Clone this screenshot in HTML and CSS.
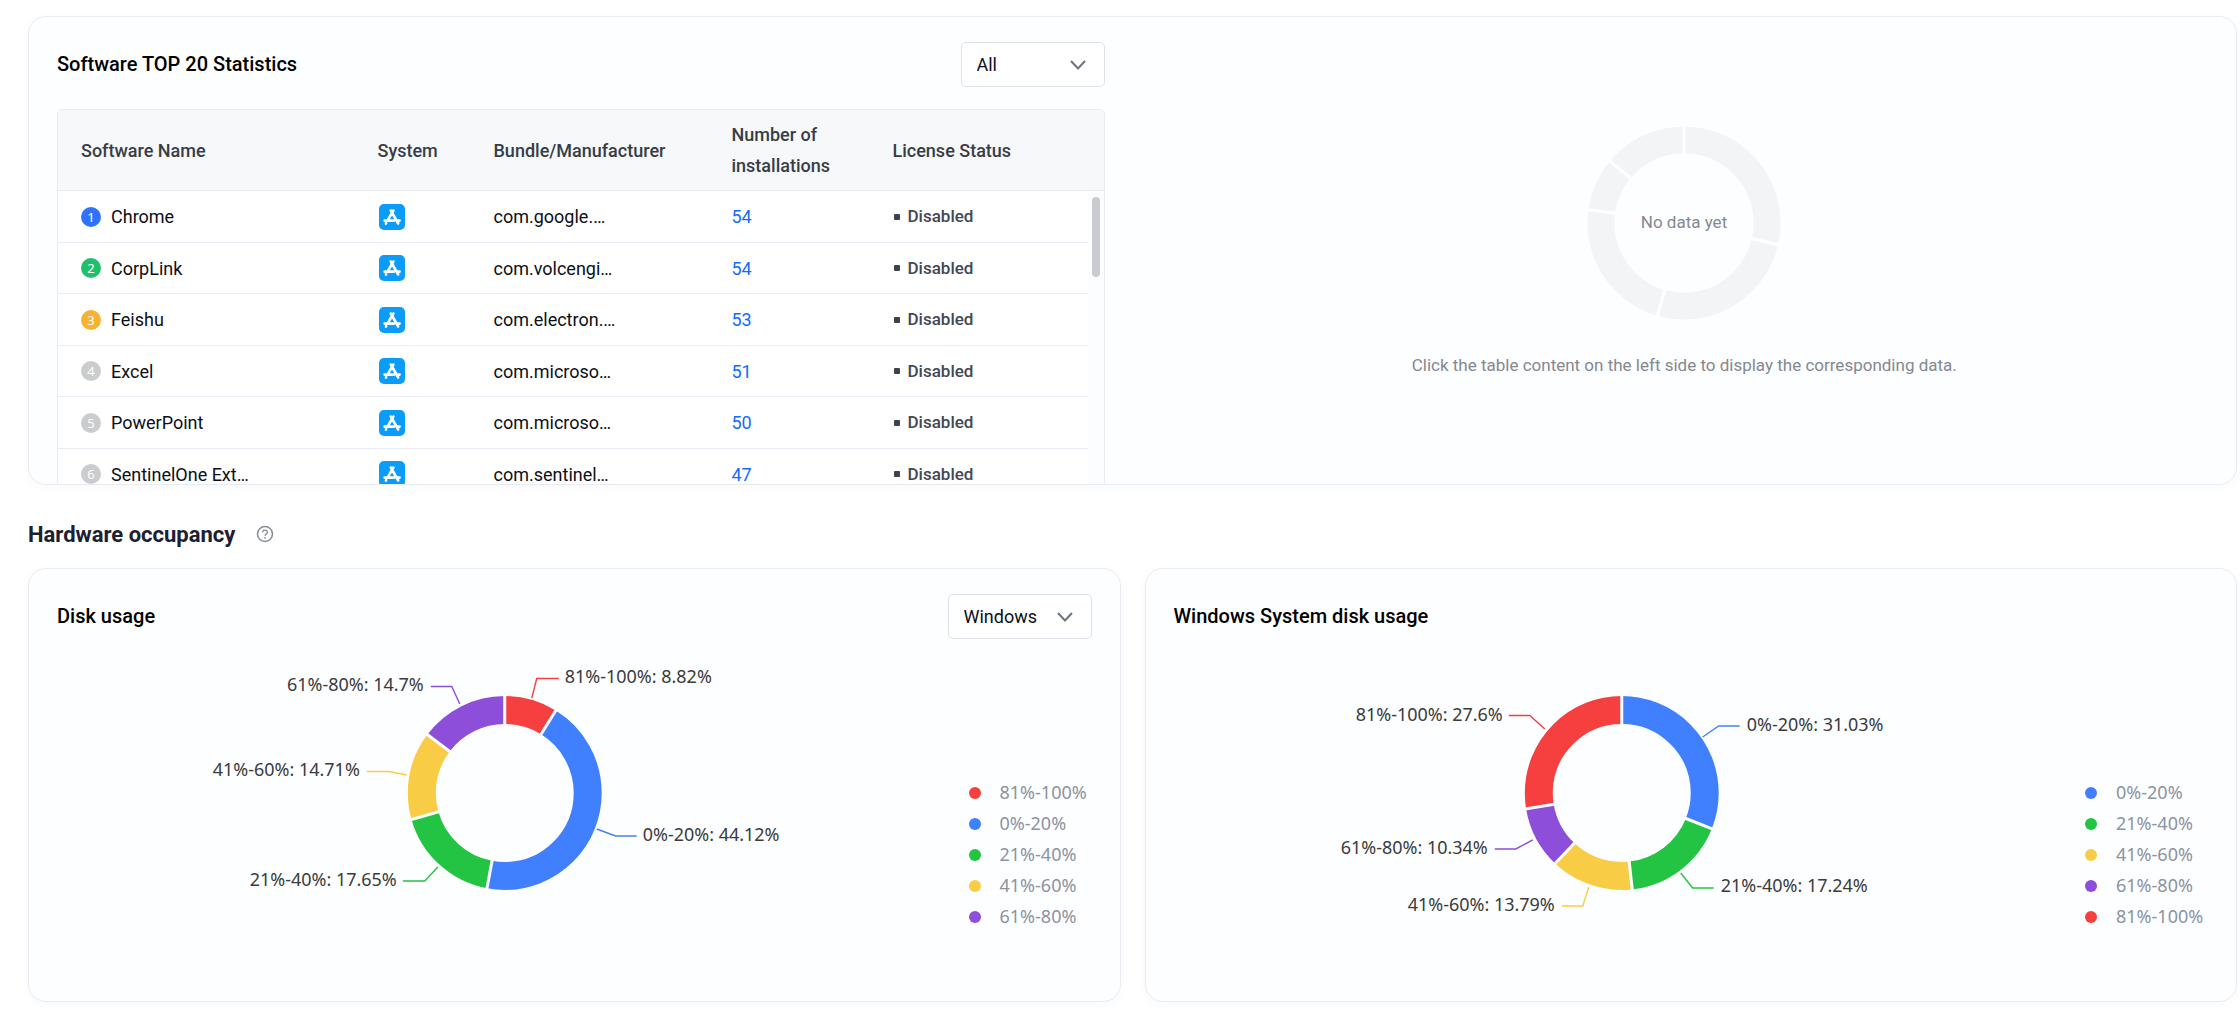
FILE: index.html
```html
<!DOCTYPE html>
<html lang="en">
<head>
<meta charset="utf-8">
<title>Device statistics</title>
<link rel="stylesheet" href="styles.css">
</head>
<body>
<svg class="defs" aria-hidden="true">
  <symbol id="app-store" viewBox="0 0 26 26">
    <rect width="26" height="26" rx="5" fill="#0a9cf8"/>
    <g fill="none" stroke="#fff" stroke-width="2.600" stroke-linecap="round">
      <path d="M14.400 6.500 8.800 16.200M11.800 6.500l7.400 13M5.600 16.600h9.400M18.400 16.600h2.200M7.200 19.200l-.3.5"/>
    </g>
  </symbol>
  <symbol id="chevron" viewBox="0 0 18 12">
    <path d="M2 2l7 7.500 7-7.500" fill="none" stroke="#6e7480" stroke-width="2"/>
  </symbol>
</svg>
<main class="page">
  <section class="card software">
    <div class="software-list">
      <header class="card-head">
        <h2 class="card-title">Software TOP 20 Statistics</h2>
        <div class="select">
          <select aria-label="System"><option>All</option></select>
          <svg class="select-arrow" aria-hidden="true"><use href="#chevron"/></svg>
        </div>
      </header>
      <div class="table-box">
        <table class="table">
          <colgroup><col class="c-name"><col class="c-system"><col class="c-bundle"><col class="c-count"><col class="c-license"><col class="c-gutter"></colgroup>
          <thead>
            <tr><th>Software Name</th><th>System</th><th>Bundle/Manufacturer</th><th>Number of installations</th><th>License Status</th><th class="gutter"></th></tr>
          </thead>
          <tbody>
            <tr><td><div class="name"><span class="rank rank-1">1</span>Chrome</div></td><td><svg class="app-icon" role="img" aria-label="macOS"><use href="#app-store"/></svg></td><td>com.google.…</td><td><a href="#">54</a></td><td><span class="status">Disabled</span></td><td class="gutter"></td></tr>
            <tr><td><div class="name"><span class="rank rank-2">2</span>CorpLink</div></td><td><svg class="app-icon" role="img" aria-label="macOS"><use href="#app-store"/></svg></td><td>com.volcengi…</td><td><a href="#">54</a></td><td><span class="status">Disabled</span></td><td class="gutter"></td></tr>
            <tr><td><div class="name"><span class="rank rank-3">3</span>Feishu</div></td><td><svg class="app-icon" role="img" aria-label="macOS"><use href="#app-store"/></svg></td><td>com.electron.…</td><td><a href="#">53</a></td><td><span class="status">Disabled</span></td><td class="gutter"></td></tr>
            <tr><td><div class="name"><span class="rank">4</span>Excel</div></td><td><svg class="app-icon" role="img" aria-label="macOS"><use href="#app-store"/></svg></td><td>com.microso…</td><td><a href="#">51</a></td><td><span class="status">Disabled</span></td><td class="gutter"></td></tr>
            <tr><td><div class="name"><span class="rank">5</span>PowerPoint</div></td><td><svg class="app-icon" role="img" aria-label="macOS"><use href="#app-store"/></svg></td><td>com.microso…</td><td><a href="#">50</a></td><td><span class="status">Disabled</span></td><td class="gutter"></td></tr>
            <tr><td><div class="name"><span class="rank">6</span>SentinelOne Ext…</div></td><td><svg class="app-icon" role="img" aria-label="macOS"><use href="#app-store"/></svg></td><td>com.sentinel…</td><td><a href="#">47</a></td><td><span class="status">Disabled</span></td><td class="gutter"></td></tr>
          </tbody>
        </table>
        <span class="scroll-thumb"></span>
      </div>
    </div>
    <div class="empty">
      <svg class="empty-ring" viewBox="0 0 194 194" aria-hidden="true">
        <circle cx="97" cy="97" r="83" fill="none" stroke="#f3f4f6" stroke-width="27"/>
        <g stroke="#fff" stroke-width="3">
          <path d="M97 29V-1"/>
          <path d="M97 29V-1" transform="rotate(103 97 97)"/>
          <path d="M97 29V-1" transform="rotate(196 97 97)"/>
          <path d="M97 29V-1" transform="rotate(278 97 97)"/>
          <path d="M97 29V-1" transform="rotate(310 97 97)"/>
        </g>
        <text class="empty-label" x="97" y="102" text-anchor="middle">No data yet</text>
      </svg>
      <p class="empty-hint">Click the table content on the left side to display the corresponding data.</p>
    </div>
  </section>

  <div class="section-head">
    <h1 class="section-title">Hardware occupancy</h1>
    <svg class="help" viewBox="0 0 18 18" role="img" aria-label="Help">
      <circle cx="9" cy="9" r="7.500" fill="none" stroke="#868d9a" stroke-width="1.500"/>
      <path d="M6.700 7.300a2.300 2.200 0 1 1 3.500 1.900c-.8.5-1.200.8-1.200 1.600" fill="none" stroke="#868d9a" stroke-width="1.400"/>
      <circle cx="9" cy="12.800" r=".9" fill="#868d9a"/>
    </svg>
  </div>

  <div class="charts">
    <section class="card">
      <header class="card-head">
        <h2 class="card-title">Disk usage</h2>
        <div class="select">
          <select aria-label="Disk system"><option>Windows</option></select>
          <svg class="select-arrow" aria-hidden="true"><use href="#chevron"/></svg>
        </div>
      </header>
      <div class="chart">
        <svg class="donut" viewBox="0 0 896 334" role="img" aria-label="Disk usage">
          <g fill="none" stroke-width="28" transform="rotate(-90 448 154)">
            <circle class="s-red" cx="448" cy="154" r="83" pathLength="100" stroke-dasharray="8.82 100"/>
            <circle class="s-blue" cx="448" cy="154" r="83" pathLength="100" stroke-dasharray="44.12 100" stroke-dashoffset="-8.82"/>
            <circle class="s-green" cx="448" cy="154" r="83" pathLength="100" stroke-dasharray="17.65 100" stroke-dashoffset="-52.94"/>
            <circle class="s-yellow" cx="448" cy="154" r="83" pathLength="100" stroke-dasharray="14.71 100" stroke-dashoffset="-70.59"/>
            <circle class="s-purple" cx="448" cy="154" r="83" pathLength="100" stroke-dasharray="14.7 100" stroke-dashoffset="-85.3"/>
          </g>
          <g stroke="#fff" stroke-width="3">
            <path d="M448 87V56"/>
            <path d="M448 87V56" transform="rotate(31.75 448 154)"/>
            <path d="M448 87V56" transform="rotate(190.58 448 154)"/>
            <path d="M448 87V56" transform="rotate(254.12 448 154)"/>
            <path d="M448 87V56" transform="rotate(307.08 448 154)"/>
          </g>
          <g fill="none" stroke-width="1.400">
            <polyline class="s-red" points="475,59 480,39.500 502,39.500"/>
            <polyline class="s-blue" points="540,190 559,197 580,197"/>
            <polyline class="s-green" points="381,228 368,242 346,242"/>
            <polyline class="s-yellow" points="350,136 332,132.500 310,132.500"/>
            <polyline class="s-purple" points="403,65 395,47.500 374,47.500"/>
          </g>
          <g class="labels">
            <text x="508" y="44">81%-100%: 8.82%</text>
            <text x="586" y="202">0%-20%: 44.12%</text>
          </g>
          <g class="labels" text-anchor="end">
            <text x="340" y="247">21%-40%: 17.65%</text>
            <text x="303" y="137">41%-60%: 14.71%</text>
            <text x="367" y="52">61%-80%: 14.7%</text>
          </g>
        </svg>
        <ul class="legend">
          <li><span class="dot b-red"></span>81%-100%</li>
          <li><span class="dot b-blue"></span>0%-20%</li>
          <li><span class="dot b-green"></span>21%-40%</li>
          <li><span class="dot b-yellow"></span>41%-60%</li>
          <li><span class="dot b-purple"></span>61%-80%</li>
        </ul>
      </div>
    </section>

    <section class="card">
      <header class="card-head">
        <h2 class="card-title">Windows System disk usage</h2>
      </header>
      <div class="chart">
        <svg class="donut" viewBox="0 0 896 334" role="img" aria-label="Windows System disk usage">
          <g fill="none" stroke-width="28" transform="rotate(-90 448 154)">
            <circle class="s-blue" cx="448" cy="154" r="83" pathLength="100" stroke-dasharray="31.03 100"/>
            <circle class="s-green" cx="448" cy="154" r="83" pathLength="100" stroke-dasharray="17.24 100" stroke-dashoffset="-31.03"/>
            <circle class="s-yellow" cx="448" cy="154" r="83" pathLength="100" stroke-dasharray="13.79 100" stroke-dashoffset="-48.27"/>
            <circle class="s-purple" cx="448" cy="154" r="83" pathLength="100" stroke-dasharray="10.34 100" stroke-dashoffset="-62.06"/>
            <circle class="s-red" cx="448" cy="154" r="83" pathLength="100" stroke-dasharray="27.6 100" stroke-dashoffset="-72.4"/>
          </g>
          <g stroke="#fff" stroke-width="3">
            <path d="M448 87V56"/>
            <path d="M448 87V56" transform="rotate(111.7 448 154)"/>
            <path d="M448 87V56" transform="rotate(173.8 448 154)"/>
            <path d="M448 87V56" transform="rotate(223.4 448 154)"/>
            <path d="M448 87V56" transform="rotate(260.6 448 154)"/>
          </g>
          <g fill="none" stroke-width="1.400">
            <polyline class="s-red" points="371,90 356,76.500 335,76.500"/>
            <polyline class="s-blue" points="529,98 545,87 566,87"/>
            <polyline class="s-purple" points="359,201 342,210 321,210"/>
            <polyline class="s-yellow" points="415,248 409,267 388,267"/>
            <polyline class="s-green" points="507,234 519,249 540,249"/>
          </g>
          <g class="labels">
            <text x="573" y="92">0%-20%: 31.03%</text>
            <text x="547" y="253">21%-40%: 17.24%</text>
          </g>
          <g class="labels" text-anchor="end">
            <text x="329" y="82">81%-100%: 27.6%</text>
            <text x="314" y="215">61%-80%: 10.34%</text>
            <text x="381" y="272">41%-60%: 13.79%</text>
          </g>
        </svg>
        <ul class="legend">
          <li><span class="dot b-blue"></span>0%-20%</li>
          <li><span class="dot b-green"></span>21%-40%</li>
          <li><span class="dot b-yellow"></span>41%-60%</li>
          <li><span class="dot b-purple"></span>61%-80%</li>
          <li><span class="dot b-red"></span>81%-100%</li>
        </ul>
      </div>
    </section>
  </div>
</main>
</body>
</html>
```
FILE: styles.css
```css
:root {
  --red: #f63f3f;
  --blue: #4080ff;
  --green: #23c343;
  --yellow: #f9cc45;
  --purple: #8d4eda;
  --line: #e8ebf1;
}

* { box-sizing: border-box; }

body {
  margin: 0;
  background: #fff;
  color: #0c0f16;
  font: 18px/31px Roboto, sans-serif;
}

h1, h2, p, ul { margin: 0; padding: 0; }

.defs { position: absolute; width: 0; height: 0; }

.page { padding: 16px 3px 6px 28px; }

.card {
  padding: 25px 28px 28px;
  background: #fdfeff;
  border: 1px solid var(--line);
  border-radius: 18px;
  box-shadow: 0 2px 10px rgba(30, 50, 90, 0.03);
}

.card-head {
  display: flex;
  align-items: center;
  justify-content: space-between;
  height: 45px;
}

.card-title { font-size: 20px; font-weight: 500; color: #000; }

.select { position: relative; width: 144px; height: 45px; }

.select select {
  width: 100%;
  height: 100%;
  padding: 0 15px;
  appearance: none;
  background: #fff;
  border: 1px solid #dde1e8;
  border-radius: 5px;
  color: #0c0f16;
  font: inherit;
}

.select-arrow {
  position: absolute;
  top: 17px;
  right: 18px;
  width: 18px;
  height: 12px;
  pointer-events: none;
}

/* Software card: its list runs on below the fold of the card */
.software {
  display: grid;
  grid-template-columns: 1fr 1fr;
  height: 469px;
  padding: 0;
  overflow: hidden;
}

.software-list { min-width: 0; padding: 25px 28px 0; }

.table-box {
  position: relative;
  height: 480px;
  margin-top: 22px;
  overflow: hidden;
  border: 1px solid var(--line);
  border-radius: 5px;
}

.table { width: 100%; table-layout: fixed; border-collapse: separate; border-spacing: 0; }

.c-system { width: 116px; }
.c-bundle { width: 238px; }
.c-count { width: 161px; }
.c-license { width: 218px; }
.c-gutter { width: 16px; }

.table th, .table td {
  padding: 0 23px;
  border-bottom: 1px solid var(--line);
  text-align: left;
  vertical-align: middle;
  white-space: nowrap;
}

.table th {
  height: 81px;
  background: #f7f8fa;
  color: #363d48;
  font-weight: 500;
  white-space: normal;
}

.table td { height: 52px; background: #fff; }
.table tr:nth-child(even) td { height: 51px; }
.table .gutter { padding: 0; }
.table td.gutter { background: #fcfdff; border-bottom: 0; }
.table a { color: #126bff; text-decoration: none; }

.name { display: flex; align-items: center; gap: 10px; }

.rank {
  width: 20px;
  height: 20px;
  border-radius: 50%;
  background: #cbccce;
  color: #fff;
  font: 13px/20px "Noto Sans", sans-serif;
  text-align: center;
}

.rank-1 { background: #2e72ff; }
.rank-2 { background: #20bf6b; }
.rank-3 { background: #f7b232; }

.app-icon { display: block; width: 26px; height: 26px; margin-left: 1px; }

.status {
  display: flex;
  align-items: center;
  gap: 8px;
  color: #424853;
  font-size: 17px;
  font-weight: 500;
}

.status::before {
  content: "";
  width: 6px;
  height: 6px;
  margin-left: 1px;
  border-radius: 1px;
  background: #3c424e;
}

.scroll-thumb {
  position: absolute;
  top: 87px;
  right: 4px;
  width: 8px;
  height: 80px;
  border-radius: 4px;
  background: #c9cbd0;
}

.empty { display: flex; flex-direction: column; align-items: center; padding-top: 109px; }
.empty-ring { width: 194px; height: 194px; }
.empty-label { fill: #85888f; font-size: 17px; }
.empty-hint { margin-top: 30px; color: #85888f; font-size: 17px; }

.section-head { display: flex; align-items: center; gap: 21px; height: 83px; padding-top: 15px; }
.section-title { color: #1c2033; font-size: 22px; font-weight: 700; }
.help { width: 18px; height: 18px; }

.charts { display: grid; grid-template-columns: 1fr 1fr; gap: 24px; }

.chart { display: grid; grid-template-columns: 1fr 139px; }
.donut { width: 100%; height: 334px; }

.labels { fill: #3b3b3b; font: 18px "Noto Sans", sans-serif; }

.legend {
  padding: 138px 0 0 16px;
  color: #8c93a1;
  font-family: "Noto Sans", sans-serif;
  list-style: none;
}

.legend li { display: flex; align-items: center; gap: 19px; }
.dot { width: 12px; height: 12px; border-radius: 50%; }

.s-red { stroke: var(--red); }
.s-blue { stroke: var(--blue); }
.s-green { stroke: var(--green); }
.s-yellow { stroke: var(--yellow); }
.s-purple { stroke: var(--purple); }

.b-red { background: var(--red); }
.b-blue { background: var(--blue); }
.b-green { background: var(--green); }
.b-yellow { background: var(--yellow); }
.b-purple { background: var(--purple); }
```
